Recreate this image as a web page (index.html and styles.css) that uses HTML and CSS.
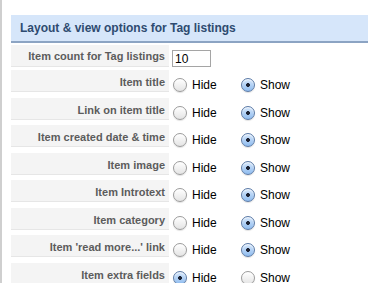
FILE: index.html
```html
<!DOCTYPE html>
<html lang="en">
  <head>
    <meta charset="UTF-8">
    <meta name="viewport" content="width=device-width, initial-scale=1.0">
    <title>Tag listings options</title>
    <link rel="stylesheet" href="styles.css">
  </head>
  <body>
    <div class="page">
      <h3 class="panel-title">Layout &amp; view options for Tag listings</h3>
      <div class="params">
        <div class="param param-first">
          <div class="param-key">Item count for Tag listings</div>
          <div class="param-value"><input type="text" class="count" value="10"></div>
        </div>
        <div class="param">
          <div class="param-key">Item title</div>
          <div class="param-value">
            <label class="opt"><input type="radio" name="title"> Hide</label>
            <label class="opt"><input type="radio" name="title" checked> Show</label>
          </div>
        </div>
        <div class="param">
          <div class="param-key">Link on item title</div>
          <div class="param-value">
            <label class="opt"><input type="radio" name="link"> Hide</label>
            <label class="opt"><input type="radio" name="link" checked> Show</label>
          </div>
        </div>
        <div class="param">
          <div class="param-key">Item created date &amp; time</div>
          <div class="param-value">
            <label class="opt"><input type="radio" name="created"> Hide</label>
            <label class="opt"><input type="radio" name="created" checked> Show</label>
          </div>
        </div>
        <div class="param">
          <div class="param-key">Item image</div>
          <div class="param-value">
            <label class="opt"><input type="radio" name="image"> Hide</label>
            <label class="opt"><input type="radio" name="image" checked> Show</label>
          </div>
        </div>
        <div class="param">
          <div class="param-key">Item Introtext</div>
          <div class="param-value">
            <label class="opt"><input type="radio" name="intro"> Hide</label>
            <label class="opt"><input type="radio" name="intro" checked> Show</label>
          </div>
        </div>
        <div class="param">
          <div class="param-key">Item category</div>
          <div class="param-value">
            <label class="opt"><input type="radio" name="category"> Hide</label>
            <label class="opt"><input type="radio" name="category" checked> Show</label>
          </div>
        </div>
        <div class="param">
          <div class="param-key">Item 'read more...' link</div>
          <div class="param-value">
            <label class="opt"><input type="radio" name="readmore"> Hide</label>
            <label class="opt"><input type="radio" name="readmore" checked> Show</label>
          </div>
        </div>
        <div class="param">
          <div class="param-key">Item extra fields</div>
          <div class="param-value">
            <label class="opt"><input type="radio" name="extra" checked> Hide</label>
            <label class="opt"><input type="radio" name="extra"> Show</label>
          </div>
        </div>
      </div>
    </div>
  </body>
</html>
```

FILE: styles.css
```css
body {
  margin: 0;
  font-family: "Liberation Sans", Arial, sans-serif;
  background-color: #fff;
  overflow: hidden;
}

.page {
  border-left: 2px solid #cfcfcf;
  padding: 15px 0 0 9px;
  height: 283px;
  box-sizing: border-box;
}

.panel-title {
  margin: 0;
  height: 26px;
  line-height: 26px;
  padding-left: 9px;
  font-size: 12px;
  font-weight: bold;
  color: #2e4b70;
  background-color: #d6e6fa;
  border-bottom: 2px solid #8ca4c3;
}

.params {
  padding-top: 2px;
}

.param {
  display: grid;
  grid-template-columns: 158px 1fr;
  column-gap: 3px;
  height: 22px;
  margin-bottom: 5.5px;
}

.param-first {
  height: 21px;
  margin-bottom: 4px;
}

.param-key {
  background-color: #f4f4f4;
  border-bottom: 1px solid #e6e6e6;
  text-align: right;
  font-size: 11px;
  font-weight: bold;
  color: #5c5c5c;
  line-height: 14px;
  padding: 5px 4px 0 0;
  box-sizing: border-box;
  white-space: nowrap;
}

.param-first .param-key {
  padding-top: 4px;
}

.param-value {
  display: flex;
  align-items: flex-start;
  padding-top: 8px;
  font-size: 12px;
  color: #000;
}

.param-first .param-value {
  padding-top: 5px;
}

.count {
  width: 39px;
  height: 17px;
  box-sizing: border-box;
  margin: 0;
  padding: 0 2px;
  border: 1px solid #a5a5a5;
  font-family: "Liberation Sans", Arial, sans-serif;
  font-size: 12px;
  color: #000;
}

.opt {
  display: flex;
  align-items: center;
  gap: 5px;
  height: 14px;
  line-height: 14px;
  width: 67px;
  padding-left: 1px;
}

.opt input {
  appearance: none;
  -webkit-appearance: none;
  margin: 0;
  width: 14px;
  height: 14px;
  flex: none;
  border-radius: 50%;
  border: 1px solid #9b9b9b;
  background: linear-gradient(#ffffff, #e4e4e4);
  box-shadow: inset 0 1px 1px rgba(255, 255, 255, 0.8), 0 1px 1px rgba(0, 0, 0, 0.12);
  box-sizing: border-box;
}

.opt input:checked {
  border-color: #5b7aa6;
  background:
    radial-gradient(circle, #1c2233 0, #1c2233 1.7px, transparent 2.2px),
    linear-gradient(#d6e7fb, #8fbcef);
}
```
